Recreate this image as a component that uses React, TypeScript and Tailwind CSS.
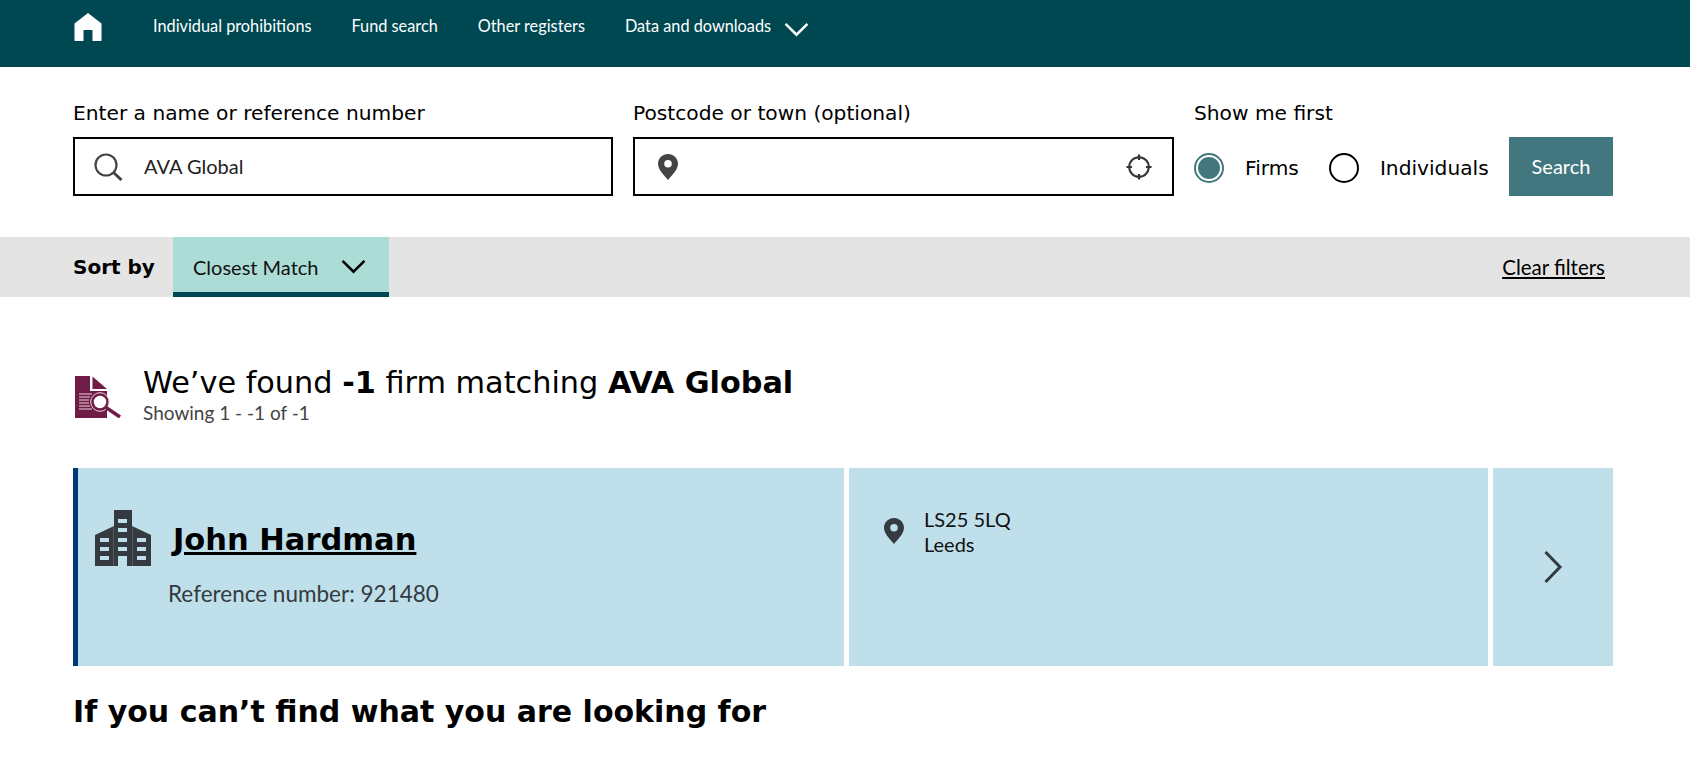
const lato = "font-['Lato','Carlito',sans-serif]";
const dejavu = "font-['DejaVu_Sans','Verdana',sans-serif]";

const HomeIcon = () => (
  <svg width="28" height="28" viewBox="0 0 28 28" className="shrink-0">
    <path d="M14 0 L27.500 10.500 V28 H18.500 V17 H9.500 V28 H0.500 V10.500 Z" fill="#fff" />
  </svg>
);

const Chevron = ({ className }: { className: string }) => (
  <svg viewBox="0 0 24 14" className={className} fill="none" stroke="currentColor" strokeWidth="2.400">
    <path d="M1.500 1.500 L12 12 L22.500 1.500" />
  </svg>
);

const SearchIcon = () => (
  <svg width="29" height="28" viewBox="0 0 29 28" fill="none" stroke="#444" className="shrink-0">
    <circle cx="12" cy="12" r="10.500" strokeWidth="2.200" />
    <path d="M19.500 19.500 L27.500 27" strokeWidth="3" />
  </svg>
);

const Pin = ({ color, className }: { color: string; className: string }) => (
  <svg viewBox="0 0 20 26" className={className}>
    <path
      fillRule="evenodd"
      fill={color}
      d="M10 0 C4.500 0 0 4.400 0 9.800 C0 16 6.500 21.500 10 26 C13.500 21.500 20 16 20 9.800 C20 4.400 15.500 0 10 0 Z M10 6 A3.800 3.800 0 1 1 10 13.600 A3.800 3.800 0 1 1 10 6 Z"
    />
  </svg>
);

const Crosshair = () => (
  <svg width="26" height="26" viewBox="0 0 26 26" fill="none" stroke="#333" className="shrink-0">
    <circle cx="13" cy="13" r="9.800" strokeWidth="2" />
    <path d="M13 0.500 V6 M13 20 V25.500 M0.500 13 H6 M20 13 H25.500" strokeWidth="2.200" />
  </svg>
);

const DocSearchIcon = () => (
  <svg width="46" height="42" viewBox="0 0 46 42" className="shrink-0">
    <path d="M0 0 H15 V15 H32 V42 H0 Z" fill="#6f1d46" />
    <path d="M17.500 0.500 L32 13 H17.500 Z" fill="#6f1d46" />
    <path d="M4 18 H17 M4 21 H15 M4 24 H14 M4 27 H14 M4 30 H15 M4 33 H17" stroke="#e9d5de" strokeWidth="1" />
    <circle cx="25" cy="26" r="7.500" fill="#fff" stroke="#6f1d46" strokeWidth="2.500" />
    <circle cx="25" cy="26" r="9.300" fill="none" stroke="#e9d5de" strokeWidth="1" />
    <path d="M31 31.500 L45 41" stroke="#6f1d46" strokeWidth="3.500" />
  </svg>
);

const BuildingIcon = () => (
  <svg width="56" height="56" viewBox="0 0 56 56" className="shrink-0">
    <path d="M19 0 H37 V16 L56 25 V56 H0 V25 L19 16 Z" fill="#343a3f" />
    <path d="M18.500 16 V56 M37.500 16 V56" stroke="#5c666c" strokeWidth="0.800" />
    <g fill="#bfdfea">
      <rect x="23" y="9" width="9" height="4" />
      <rect x="23" y="18" width="9" height="4" />
      <rect x="5" y="28" width="9" height="4" />
      <rect x="23" y="28" width="9" height="4" />
      <rect x="42" y="28" width="9" height="4" />
      <rect x="5" y="37" width="9" height="4" />
      <rect x="23" y="37" width="9" height="4" />
      <rect x="42" y="37" width="9" height="4" />
      <rect x="5" y="46" width="9" height="4" />
      <rect x="23" y="46" width="9" height="10" />
      <rect x="42" y="46" width="9" height="4" />
    </g>
  </svg>
);

const navLinks = ["Individual prohibitions", "Fund search", "Other registers"];

const App = () => {
  return (
    <div className={`h-[760px] overflow-hidden bg-white text-black ${lato}`}>
      {/* Top nav */}
      <header className="flex h-[67px] items-start bg-[#004851] pl-[74px] text-white">
        <a className="mt-[13px]" href="#">
          <HomeIcon />
        </a>
        <nav className="ml-[51px] mt-[15px] flex items-center gap-10 text-[16.300px] leading-[22px]">
          {navLinks.map((link) => (
            <a key={link} href="#">
              {link}
            </a>
          ))}
          <a href="#" className="flex items-center gap-[13px]">
            Data and downloads
            <Chevron className="mt-1.5 h-[15px] w-[25px]" />
          </a>
        </nav>
      </header>

      {/* Search form */}
      <section className={`flex h-[170px] gap-5 pl-[73px] pr-[77px] pt-[35px] text-[20.200px] ${dejavu}`}>
        <div className="w-[540px]">
          <label className="block leading-[22px]">Enter a name or reference number</label>
          <div className="mt-[13px] flex h-[59px] items-center gap-[21px] border-2 border-black pl-[19px]">
            <SearchIcon />
            <span className={`-mt-0.5 text-[20px] text-[#222] ${lato}`}>AVA Global</span>
          </div>
        </div>
        <div className="w-[541px]">
          <label className="block leading-[22px]">Postcode or town (optional)</label>
          <div className="mt-[13px] flex h-[59px] items-center justify-between border-2 border-black pl-[23px] pr-[20px]">
            <Pin color="#444" className="h-[26px] w-5" />
            <Crosshair />
          </div>
        </div>
        <div className="flex-1">
          <label className="block leading-[22px]">Show me first</label>
          <div className="mt-[13px] flex h-[59px] items-start">
            <div className="mt-4 flex items-center">
              <span className="flex h-[30px] w-[30px] items-center justify-center rounded-full border-2 border-[#42777f]">
                <span className="h-[22px] w-[22px] rounded-full bg-[#42777f]" />
              </span>
              <span className="ml-[21px]">Firms</span>
              <span className="ml-[30px] h-[30px] w-[30px] rounded-full border-2 border-black" />
              <span className="ml-[21px]">Individuals</span>
            </div>
            <button className={`ml-auto h-[59px] w-[104px] bg-[#42777f] pb-0.5 text-[20px] text-white ${lato}`}>
              Search
            </button>
          </div>
        </div>
      </section>

      {/* Sort bar */}
      <section className="flex h-[60px] items-stretch bg-[#e4e4e4] pl-[73px] pr-[85px]">
        <span className={`w-[100px] self-center text-[20px] font-bold ${dejavu}`}>Sort by</span>
        <div className="flex w-[216px] items-center gap-[22px] border-b-[5px] border-[#004851] bg-[#abdcd6] pl-5 text-[20px] text-[#111]">
          <span className="mt-[5px]">Closest Match</span>
          <Chevron className="mt-[3px] h-[15px] w-[25px] text-black" />
        </div>
        <a href="#" className="ml-auto self-center text-[20.500px] underline underline-offset-2">
          Clear filters
        </a>
      </section>

      {/* Results summary */}
      <section className="flex items-start pl-[75px] pr-[77px] pt-[79px]">
        <DocSearchIcon />
        <div className="ml-[22px] -mt-[11px]">
          <h2 className={`text-[30.300px] leading-[36px] ${dejavu}`}>
            We’ve found <b>-1</b> firm matching <b>AVA Global</b>
          </h2>
          <p className="text-[19px] leading-[24px] text-[#444]">Showing 1 - -1 of -1</p>
        </div>
      </section>

      {/* Result card */}
      <section className="ml-[73px] mr-[77px] mt-[43px] flex h-[198px] gap-[5px]">
        <div className="w-[771px] border-l-[5px] border-[#003a75] bg-[#bfdfea] pl-[17px] pt-[42px]">
          <div className="flex items-start gap-[22px]">
            <BuildingIcon />
            <a href="#" className={`mt-[11px] text-[30.500px] font-bold leading-[38px] underline ${dejavu}`}>
              John Hardman
            </a>
          </div>
          <p className="ml-[73px] mt-[14px] text-[22.500px] leading-7 text-[#343a3f]">Reference number: 921480</p>
        </div>
        <div className="flex w-[639px] items-start bg-[#bfdfea] pl-[35px] pt-[39px]">
          <Pin color="#343a3f" className="mt-[11px] h-[26px] w-5" />
          <div className="ml-5 text-[20px] leading-[25px] text-[#111]">
            <div>LS25 5LQ</div>
            <div>Leeds</div>
          </div>
        </div>
        <div className="flex flex-1 items-center justify-center bg-[#bfdfea]">
          <svg width="20" height="32" viewBox="0 0 20 32" fill="none" stroke="#343a3f" strokeWidth="3">
            <path d="M2.500 1 L17 16 L2.500 31" />
          </svg>
        </div>
      </section>

      <h2 className={`ml-[73px] mt-[25px] text-[30px] font-bold leading-[42px] ${dejavu}`}>
        If you can’t find what you are looking for
      </h2>
    </div>
  );
};

export default App;
